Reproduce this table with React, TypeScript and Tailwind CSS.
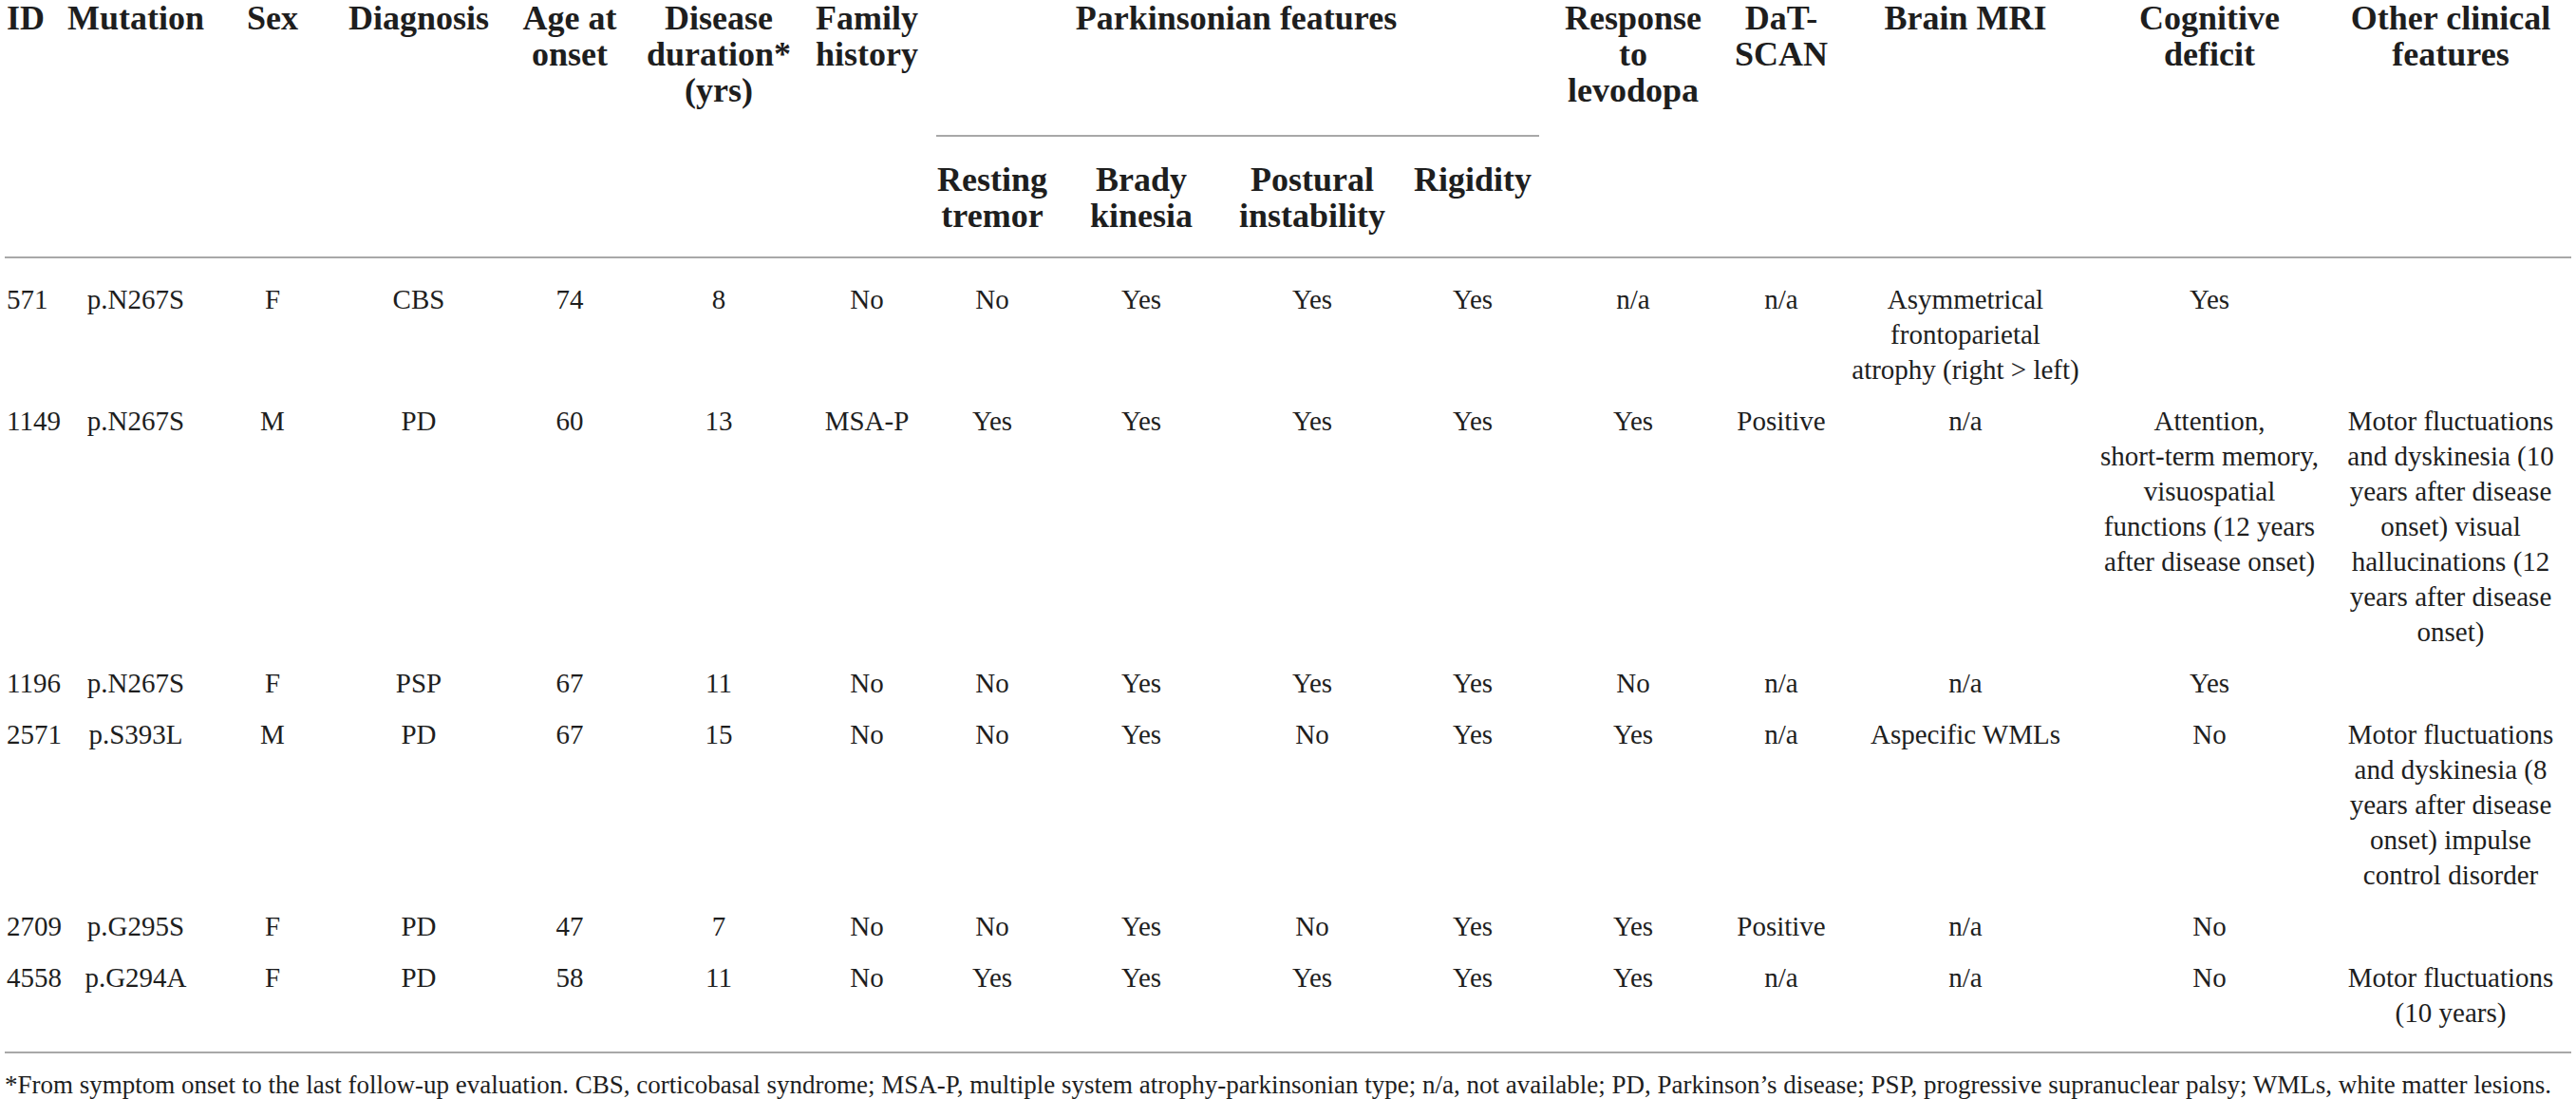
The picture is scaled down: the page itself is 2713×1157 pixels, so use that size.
import type { ReactNode } from "react";

type Row = {
  id: string;
  mutation: string;
  sex: string;
  diagnosis: string;
  age: string;
  duration: string;
  family: string;
  tremor: string;
  brady: string;
  postural: string;
  rigidity: string;
  levodopa: string;
  datscan: string;
  mri: string;
  cognitive: ReactNode;
  other: string;
};

const rows: Row[] = [
  {
    id: "571", mutation: "p.N267S", sex: "F", diagnosis: "CBS", age: "74", duration: "8", family: "No",
    tremor: "No", brady: "Yes", postural: "Yes", rigidity: "Yes", levodopa: "n/a", datscan: "n/a",
    mri: "Asymmetrical frontoparietal atrophy (right > left)", cognitive: "Yes", other: "",
  },
  {
    id: "1149", mutation: "p.N267S", sex: "M", diagnosis: "PD", age: "60", duration: "13", family: "MSA-P",
    tremor: "Yes", brady: "Yes", postural: "Yes", rigidity: "Yes", levodopa: "Yes", datscan: "Positive",
    mri: "n/a",
    // keep "short-term" together, the source breaks before it
    cognitive: (
      <>
        Attention,<br />
        short-term memory, visuospatial functions (12 years after disease onset)
      </>
    ),
    other: "Motor fluctuations and dyskinesia (10 years after disease onset) visual hallucinations (12 years after disease onset)",
  },
  {
    id: "1196", mutation: "p.N267S", sex: "F", diagnosis: "PSP", age: "67", duration: "11", family: "No",
    tremor: "No", brady: "Yes", postural: "Yes", rigidity: "Yes", levodopa: "No", datscan: "n/a",
    mri: "n/a", cognitive: "Yes", other: "",
  },
  {
    id: "2571", mutation: "p.S393L", sex: "M", diagnosis: "PD", age: "67", duration: "15", family: "No",
    tremor: "No", brady: "Yes", postural: "No", rigidity: "Yes", levodopa: "Yes", datscan: "n/a",
    mri: "Aspecific WMLs", cognitive: "No",
    other: "Motor fluctuations and dyskinesia (8 years after disease onset) impulse control disorder",
  },
  {
    id: "2709", mutation: "p.G295S", sex: "F", diagnosis: "PD", age: "47", duration: "7", family: "No",
    tremor: "No", brady: "Yes", postural: "No", rigidity: "Yes", levodopa: "Yes", datscan: "Positive",
    mri: "n/a", cognitive: "No", other: "",
  },
  {
    id: "4558", mutation: "p.G294A", sex: "F", diagnosis: "PD", age: "58", duration: "11", family: "No",
    tremor: "Yes", brady: "Yes", postural: "Yes", rigidity: "Yes", levodopa: "Yes", datscan: "n/a",
    mri: "n/a", cognitive: "No", other: "Motor fluctuations (10 years)",
  },
];

// column widths, measured off the source table
const widths = [53, 170, 118, 190, 128, 186, 126, 138, 176, 184, 154, 184, 128, 260, 254, 254];

function Th({ children, className = "", ...rest }: { children: ReactNode; className?: string; rowSpan?: number; colSpan?: number }) {
  return (
    <th
      {...rest}
      className={`whitespace-nowrap p-0 align-top text-center text-[36px] font-bold leading-[38px] ${className}`}
    >
      {children}
    </th>
  );
}

export default function App() {
  return (
    <div className="min-h-[1157px] bg-white pl-[5px] text-[#1e1e1e] [font-family:'Liberation_Serif',serif]">
      <table className="w-[2703px] table-fixed border-collapse">
        <colgroup>
          {widths.map((w, i) => (
            <col key={i} style={{ width: w }} />
          ))}
        </colgroup>
        <thead className="border-b-2 border-[#a8a8a8]">
          <tr>
            <Th rowSpan={2} className="pl-[2px] text-left">ID</Th>
            <Th rowSpan={2}>Mutation</Th>
            <Th rowSpan={2}>Sex</Th>
            <Th rowSpan={2}>Diagnosis</Th>
            <Th rowSpan={2}>Age at<br />onset</Th>
            <Th rowSpan={2}>Disease<br />duration*<br />(yrs)</Th>
            <Th rowSpan={2}>Family<br />history</Th>
            <Th colSpan={4}>
              <div className="h-[142px]">Parkinsonian features</div>
              <div className="ml-[10px] mr-[7px] h-[2px] bg-[#a8a8a8]" />
            </Th>
            <Th rowSpan={2}>Response<br />to<br />levodopa</Th>
            <Th rowSpan={2}>DaT-<br />SCAN</Th>
            <Th rowSpan={2}>Brain MRI</Th>
            <Th rowSpan={2}>Cognitive<br />deficit</Th>
            <Th rowSpan={2}>Other clinical<br />features</Th>
          </tr>
          <tr>
            <Th className="pt-[26px] pb-[24px]">Resting<br />tremor</Th>
            <Th className="pt-[26px] pb-[24px]">Brady<br />kinesia</Th>
            <Th className="pt-[26px] pb-[24px]">Postural<br />instability</Th>
            <Th className="pt-[26px] pb-[24px]">Rigidity</Th>
          </tr>
        </thead>
        <tbody className="border-b-2 border-[#a8a8a8] text-[29px] leading-[37px]">
          {rows.map((r, i) => {
            const pad = i === 0 ? "pt-[25px] pb-[9px]" : i === rows.length - 1 ? "pt-2 pb-[22px]" : "pt-2 pb-[9px]";
            const cell = `align-top text-center px-[4px] ${pad}`;
            return (
              <tr key={r.id}>
                <td className={`align-top text-left pl-[2px] ${pad}`}>{r.id}</td>
                <td className={cell}>{r.mutation}</td>
                <td className={cell}>{r.sex}</td>
                <td className={cell}>{r.diagnosis}</td>
                <td className={cell}>{r.age}</td>
                <td className={cell}>{r.duration}</td>
                <td className={cell}>{r.family}</td>
                <td className={cell}>{r.tremor}</td>
                <td className={cell}>{r.brady}</td>
                <td className={cell}>{r.postural}</td>
                <td className={cell}>{r.rigidity}</td>
                <td className={cell}>{r.levodopa}</td>
                <td className={cell}>{r.datscan}</td>
                <td className={`align-top text-center px-[7px] ${pad}`}>{r.mri}</td>
                <td className={`align-top text-center px-[8px] ${pad}`}>{r.cognitive}</td>
                <td className={`align-top text-center px-[8px] ${pad}`}>{r.other}</td>
              </tr>
            );
          })}
        </tbody>
      </table>
      <p className="mt-[16px] text-[27px] leading-[34px]">
        *From symptom onset to the last follow-up evaluation. CBS, corticobasal syndrome; MSA-P, multiple system
        atrophy-parkinsonian type; n/a, not available; PD, Parkinson’s disease; PSP, progressive supranuclear palsy;
        WMLs, white matter lesions.
      </p>
    </div>
  );
}
